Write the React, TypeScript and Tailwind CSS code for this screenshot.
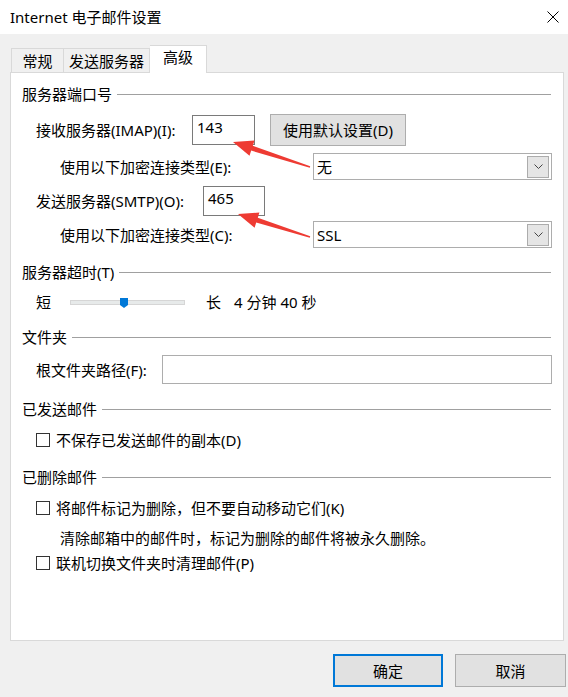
import React from 'react';

function SectionHeader({ title, className = '' }: { title: string; className?: string }) {
  return (
    <div className={`flex items-center h-[20px] pl-[11px] pr-[12px] ${className}`}>
      <span className="whitespace-nowrap">{title}</span>
      <div className="flex-1 h-px bg-[#a0a0a0] ml-[5px]" />
    </div>
  );
}

function Select({ value }: { value: string }) {
  return (
    <div className="w-[239px] h-[27px] border border-[#adadad] bg-white flex items-center justify-between pl-[3px] pr-[2px]">
      <span>{value}</span>
      <div className="w-[22px] h-[22px] bg-[#e5e5e5] border border-[#acacac] flex items-center justify-center">
        <svg width="9" height="5" viewBox="0 0 9 5">
          <polyline points="0.5,0.5 4.5,4.5 8.5,0.5" fill="none" stroke="#444" strokeWidth="1" />
        </svg>
      </div>
    </div>
  );
}

function Checkbox({ label, className = '' }: { label: string; className?: string }) {
  return (
    <div className={`flex items-center h-[20px] pl-[25px] ${className}`}>
      <div className="w-[14px] h-[14px] border border-[#333] bg-white" />
      <span className="ml-[6px]">{label}</span>
    </div>
  );
}

export default function App() {
  return (
    <div className="relative w-[568px] h-[697px] bg-[#f0f0f0] text-black text-[15px] leading-[20px] font-['Noto_Sans','Noto_Sans_CJK_SC',sans-serif] overflow-hidden">
      {/* Title bar */}
      <div className="h-[34px] bg-white flex items-center justify-between pl-[10px] pr-[8px]">
        <span className="text-[15px]">Internet 电子邮件设置</span>
        <svg width="12" height="12" viewBox="0 0 12 12" className="mr-[1px]">
          <path d="M0.5 0.5 L11.5 11.5 M11.5 0.5 L0.5 11.5" stroke="#000" strokeWidth="1" />
        </svg>
      </div>

      {/* Tabs */}
      <div className="flex items-end pl-[11px] mt-[11px] h-[27px]">
        <div className="h-[24px] w-[53px] border border-b-0 border-[#d9d9d9] bg-[#f0f0f0] flex items-center justify-center">常规</div>
        <div className="h-[24px] w-[86px] border border-b-0 border-l-0 border-[#d9d9d9] bg-[#f0f0f0] flex items-center justify-center">发送服务器</div>
        <div className="relative z-10 h-[28px] -mb-px w-[57px] border border-b-0 border-l-0 border-[#d9d9d9] bg-white flex items-start pt-[1px] justify-center">高级</div>
      </div>

      {/* Panel */}
      <div className="ml-[10px] w-[554px] h-[569px] border border-[#d9d9d9] bg-white">
        <SectionHeader title="服务器端口号" className="mt-[11px]" />

        <div className="flex items-center h-[32px] mt-[10px] pl-[25px]">
          <span className="w-[156px]">接收服务器(IMAP)(I):</span>
          <div className="w-[63px] h-[30px] border border-[#7a7a7a] bg-white pl-[4px] pt-[1px]">143</div>
          <div className="ml-[15px] w-[136px] h-[32px] bg-[#e1e1e1] border border-[#adadad] flex items-center justify-center">使用默认设置(D)</div>
        </div>

        <div className="flex items-center justify-between h-[27px] mt-[7px] pl-[49px] pr-[11px]">
          <span>使用以下加密连接类型(E):</span>
          <Select value="无" />
        </div>

        <div className="flex items-center h-[30px] mt-[6px] pl-[25px]">
          <span className="w-[167px]">发送服务器(SMTP)(O):</span>
          <div className="w-[62px] h-[30px] border border-[#7a7a7a] bg-white pl-[4px] pt-[1px]">465</div>
        </div>

        <div className="flex items-center justify-between h-[27px] mt-[5px] pl-[49px] pr-[11px]">
          <span>使用以下加密连接类型(C):</span>
          <Select value="SSL" />
        </div>

        <SectionHeader title="服务器超时(T)" className="mt-[14px]" />

        <div className="flex items-center h-[20px] mt-[10px] pl-[25px]">
          <span className="w-[34px]">短</span>
          <div className="relative w-[115px] h-[5px] bg-[#e7eaea] border border-[#d6d6d6]">
            <svg width="8" height="10" viewBox="0 0 8 10" className="absolute left-[49px] top-[-3px]">
              <path d="M0 0 H8 V7 L4 10 L0 7 Z" fill="#0078d7" />
            </svg>
          </div>
          <span className="ml-[21px]">长</span>
          <span className="ml-[13px]">4 分钟 40 秒</span>
        </div>

        <SectionHeader title="文件夹" className="mt-[15px]" />

        <div className="flex items-center h-[29px] mt-[8px] pl-[25px] pr-[11px]">
          <span className="w-[126px]">根文件夹路径(F):</span>
          <div className="flex-1 h-[29px] border border-[#adadad] bg-white" />
        </div>

        <SectionHeader title="已发送邮件" className="mt-[15px]" />
        <Checkbox label="不保存已发送邮件的副本(D)" className="mt-[11px]" />

        <SectionHeader title="已删除邮件" className="mt-[17px]" />
        <Checkbox label="将邮件标记为删除，但不要自动移动它们(K)" className="mt-[11px]" />
        <div className="h-[20px] mt-[10px] pl-[49px]">清除邮箱中的邮件时，标记为删除的邮件将被永久删除。</div>
        <Checkbox label="联机切换文件夹时清理邮件(P)" className="mt-[5px]" />
      </div>

      {/* Footer buttons */}
      <div className="flex justify-end gap-[12px] mt-[13px] pr-[2px]">
        <div className="w-[110px] h-[33px] bg-[#e1e1e1] border-2 border-[#0078d7] flex items-center justify-center">确定</div>
        <div className="w-[111px] h-[33px] bg-[#e1e1e1] border border-[#adadad] flex items-center justify-center">取消</div>
      </div>

      {/* Annotation arrows */}
      <svg className="absolute left-0 top-0 pointer-events-none" width="568" height="697">
        <polygon
          points="233,142 254.5,140.6 252.8,145.8 310.2,166.3 309.8,167.7 251.2,150.6 249.5,155.8"
          fill="#ee3b33"
        />
        <polygon
          points="238,214 259.4,212.5 257.8,217.7 310.2,236.3 309.8,237.7 256.2,222.5 254.6,227.7"
          fill="#ee3b33"
        />
      </svg>
    </div>
  );
}
